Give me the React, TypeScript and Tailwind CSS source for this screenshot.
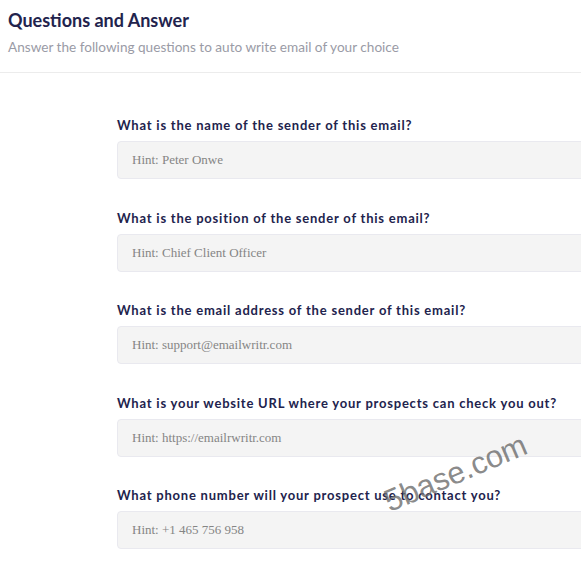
import React from "react";

const QUESTIONS = [
  { label: "What is the name of the sender of this email?", hint: "Hint: Peter Onwe" },
  { label: "What is the position of the sender of this email?", hint: "Hint: Chief Client Officer" },
  { label: "What is the email address of the sender of this email?", hint: "Hint: support@emailwritr.com" },
  { label: "What is your website URL where your prospects can check you out?", hint: "Hint: https://emailrwritr.com" },
  { label: "What phone number will your prospect use to contact you?", hint: "Hint: +1 465 756 958" },
];

export default function App() {
  return (
    <div className="relative w-full min-h-[565px] overflow-hidden bg-white font-['Lato','Liberation_Sans',sans-serif]">
      {/* header */}
      <div className="px-2 pt-[9px] pb-[17px] border-b border-[#ececec]">
        <h1 className="text-[18px] leading-[22px] font-bold text-[#22234d]">Questions and Answer</h1>
        <p className="mt-[8px] text-[13.6px] leading-[16px] text-[#9a9ba6]">
          Answer the following questions to auto write email of your choice
        </p>
      </div>

      {/* questions */}
      <div className="pl-[117px] pt-[44px] flex flex-col gap-[30.5px]">
        {QUESTIONS.map((q, i) => (
          <div key={i} className="flex flex-col gap-[8px]">
            <label className="text-[13px] leading-[16px] font-bold tracking-[0.78px] text-[#22234d] whitespace-nowrap">
              {q.label}
            </label>
            <input
              type="text"
              placeholder={q.hint}
              className="w-[520px] h-[38px] px-[14px] rounded-[4px] border border-[#e9e9ef] bg-[#f4f4f4] text-[13px] font-['Liberation_Serif',serif] placeholder:text-[#858585] outline-none"
            />
          </div>
        ))}
      </div>

      {/* watermark */}
      <div className="absolute left-[386px] top-[480px] -rotate-[23deg] origin-left text-[31px] font-['Liberation_Sans',sans-serif] text-[#6b6b6b]/80 pointer-events-none select-none">
        5base.com
      </div>
    </div>
  );
}
